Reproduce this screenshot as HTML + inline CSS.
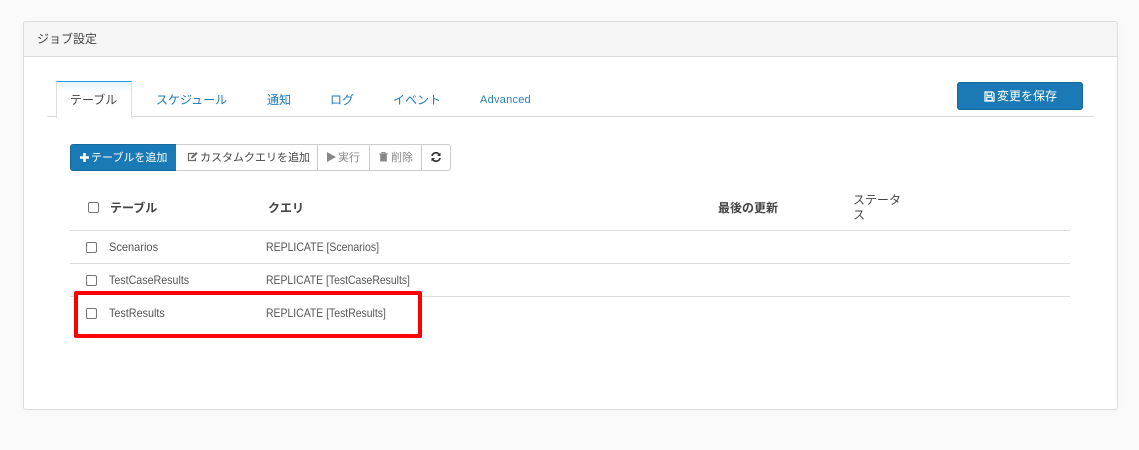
<!DOCTYPE html>
<html><head><meta charset="utf-8"><style>
html,body{margin:0;padding:0;width:1139px;height:450px;overflow:hidden;background:#fafafa;font-family:"Liberation Sans","Noto Sans CJK JP",sans-serif;font-size:12px;color:#555}
.a{position:absolute;white-space:nowrap}
.l{position:absolute;background:#ddd;height:1px}
.cb{position:absolute;width:9px;height:9px;border:1px solid #767676;border-radius:2px;background:#fff}
.tab{color:#1a7ab5;top:92px;line-height:16px;font-size:12px}
.b{position:absolute;top:144px;height:27px;box-sizing:border-box}
.bt{position:absolute;top:151px;font-size:11px;line-height:15px;white-space:nowrap}
.ic{position:absolute}
.t{font-size:12px;line-height:16px;color:#555;transform-origin:0 50%}
.h{font-size:12px;line-height:16px;color:#444;font-weight:bold}
</style></head><body>
<div class="a" style="left:23px;top:21px;width:1093px;height:387px;background:#fff;border:1px solid #ddd;border-radius:3px;box-shadow:0 0 12px rgba(0,0,0,.02)"></div>
<div class="a" style="left:24px;top:22px;width:1093px;height:34px;background:#f5f5f5;border-bottom:1px solid #ddd;border-radius:2px 2px 0 0"></div>
<div class="a t" style="left:37px;top:31px;color:#444">ジョブ設定</div>

<div class="l" style="left:47px;top:116px;width:1047px"></div>
<div class="a" style="left:56px;top:81px;width:74px;height:36px;background:linear-gradient(#e6f4fd,#fff 10px);background-color:#fff;border:1px solid #ddd;border-top:1px solid #1e9be0;border-bottom:none"></div>
<div class="a tab" style="left:70px;color:#444">テーブル</div>
<div class="a tab" style="left:156px">スケジュール</div>
<div class="a tab" style="left:267px">通知</div>
<div class="a tab" style="left:330px">ログ</div>
<div class="a tab" style="left:393px">イベント</div>
<div class="a tab" style="left:480px;font-size:11px;letter-spacing:.25px;color:#2a80bb">Advanced</div>

<div class="b" style="left:957px;top:82px;width:126px;height:28px;background:#1a7ab5;border:1px solid #16699c;border-radius:3px"></div>
<svg class="ic" style="left:984px;top:91px" width="11" height="11" viewBox="0 0 11 11"><path d="M1 1h7.500L10 2.500V10H1z M3 1.800v2.700h4.500V1.800 M2.800 6.200h5.400V9.600H2.800z" fill="none" stroke="#fff" stroke-width="1.200"/></svg>
<div class="bt" style="left:997px;top:88px;font-size:12px;line-height:16px;color:#fff">変更を保存</div>

<div class="b" style="left:70px;width:107px;background:#1a7ab5;border:1px solid #16699c;border-radius:3px 0 0 3px"></div>
<svg class="ic" style="left:80px;top:153px" width="9" height="9" viewBox="0 0 9 9"><path d="M3.200 0h2.600v3.200H9v2.600H5.800V9H3.200V5.800H0V3.200h3.200z" fill="#fff"/></svg>
<div class="bt" style="left:91px;color:#fff">テーブルを追加</div>

<div class="b" style="left:176px;width:142px;background:#fff;border:1px solid #ccc;border-left:none"></div>
<svg class="ic" style="left:187px;top:152px" width="11" height="10" viewBox="0 0 11 10"><path d="M7 1.500H1.500v7h7V6" fill="none" stroke="#666" stroke-width="1.200"/><path d="M4 6.500l.5-2L9 0l1.500 1.500-4.500 4.500z" fill="#666"/></svg>
<div class="bt" style="left:200px;color:#444">カスタムクエリを追加</div>

<div class="b" style="left:317px;width:53px;background:#fff;border:1px solid #ccc"></div>
<svg class="ic" style="left:327px;top:152px" width="9" height="10" viewBox="0 0 9 10"><path d="M0 0l9 5-9 5z" fill="#888"/></svg>
<div class="bt" style="left:338px;color:#888">実行</div>

<div class="b" style="left:369px;width:53px;background:#fff;border:1px solid #ccc"></div>
<svg class="ic" style="left:379px;top:152px" width="9" height="10" viewBox="0 0 9 10"><path d="M0 2h9M3 2V.6h3V2" fill="none" stroke="#888" stroke-width="1.100"/><path d="M1.200 2.500h6.600v7H1.200z" fill="#888"/></svg>
<div class="bt" style="left:391px;color:#888">削除</div>

<div class="b" style="left:421px;width:30px;background:#fff;border:1px solid #ccc;border-radius:0 3px 3px 0"></div>
<svg class="ic" style="left:431px;top:152px" width="10" height="10" viewBox="0 0 10 10"><path d="M1 4a4 4 0 0 1 7-1.800M9 6a4 4 0 0 1-7 1.800" fill="none" stroke="#333" stroke-width="1.700"/><path d="M9.500 .5v3.500H6zM.5 9.500V6H4z" fill="#333"/></svg>

<div class="cb" style="left:88px;top:202px"></div>
<div class="a h" style="left:110px;top:200px">テーブル</div>
<div class="a h" style="left:268px;top:200px">クエリ</div>
<div class="a h" style="left:718px;top:200px">最後の更新</div>
<div class="a" style="left:853px;top:193px;font-size:12px;line-height:15px;color:#444">ステータ<br>ス</div>
<div class="l" style="left:70px;top:230px;width:1000px"></div>

<div class="cb" style="left:86px;top:242px"></div>
<div class="a t" style="left:109px;top:239px;transform:scaleX(.92)">Scenarios</div>
<div class="a t" style="left:266px;top:239px;transform:scaleX(.875)">REPLICATE [Scenarios]</div>
<div class="l" style="left:70px;top:263px;width:1000px"></div>

<div class="cb" style="left:86px;top:275px"></div>
<div class="a t" style="left:109px;top:272px;transform:scaleX(.89)">TestCaseResults</div>
<div class="a t" style="left:266px;top:272px;transform:scaleX(.868)">REPLICATE [TestCaseResults]</div>
<div class="l" style="left:70px;top:296px;width:4px"></div>
<div class="l" style="left:422px;top:296px;width:648px"></div>

<div class="cb" style="left:86px;top:308px"></div>
<div class="a t" style="left:109px;top:305px;transform:scaleX(.9)">TestResults</div>
<div class="a t" style="left:266px;top:305px;transform:scaleX(.87)">REPLICATE [TestResults]</div>

<div class="a" style="left:74px;top:291px;width:340px;height:39px;border:4px solid #f00;border-radius:2px"></div>
</body></html>
